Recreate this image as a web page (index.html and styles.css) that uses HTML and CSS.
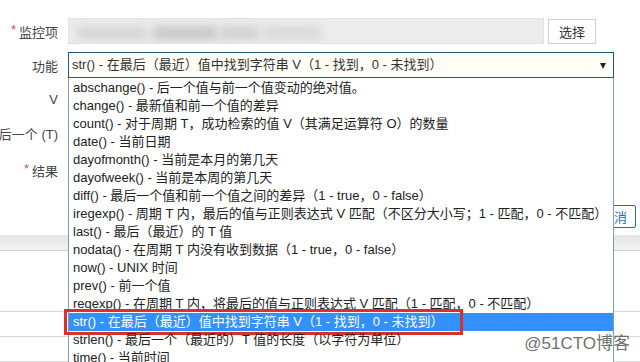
FILE: index.html
```html
<!DOCTYPE html>
<html lang="zh-CN">
<head>
  <meta charset="UTF-8">
  <title>触发器表达式</title>
  <link rel="stylesheet" href="styles.css">
</head>
<body>
  <div class="dialog">
    <div class="row">
      <div class="label"><span class="req">*</span>监控项</div>
      <div class="field">
        <div class="input-blur">
          <span class="blot b1"></span>
          <span class="blot b2"></span>
          <span class="blot b3"></span>
          <span class="blot b4"></span>
        </div>
        <button class="btn">选择</button>
      </div>
    </div>
    <div class="row">
      <div class="label">功能</div>
      <div class="select">
        <span class="select-value">str() - 在最后（最近）值中找到字符串 V（1 - 找到，0 - 未找到）</span>
        <span class="select-arrow"></span>
        <ul class="options">
          <li>abschange() - 后一个值与前一个值变动的绝对值。</li>
          <li>change() - 最新值和前一个值的差异</li>
          <li>count() - 对于周期 T，成功检索的值 V（其满足运算符 O）的数量</li>
          <li>date() - 当前日期</li>
          <li>dayofmonth() - 当前是本月的第几天</li>
          <li>dayofweek() - 当前是本周的第几天</li>
          <li>diff() - 最后一个值和前一个值之间的差异（1 - true，0 - false）</li>
          <li>iregexp() - 周期 T 内，最后的值与正则表达式 V 匹配（不区分大小写；1 - 匹配，0 - 不匹配）</li>
          <li>last() - 最后（最近）的 T 值</li>
          <li>nodata() - 在周期 T 内没有收到数据（1 - true，0 - false）</li>
          <li>now() - UNIX 时间</li>
          <li>prev() - 前一个值</li>
          <li>regexp() - 在周期 T 内，将最后的值与正则表达式 V 匹配（1 - 匹配，0 - 不匹配）</li>
          <li class="selected">str() - 在最后（最近）值中找到字符串 V（1 - 找到，0 - 未找到）</li>
          <li>strlen() - 最后一个（最近的）T 值的长度（以字符为单位）</li>
          <li>time() - 当前时间</li>
        </ul>
      </div>
    </div>
    <div class="row">
      <div class="label">V</div>
      <div class="field"><div class="input"></div></div>
    </div>
    <div class="row">
      <div class="label"><span>最后一个 (T)</span></div>
      <div class="field"><div class="input"></div></div>
    </div>
    <div class="row row-result">
      <div class="label"><span class="req">*</span>结果</div>
      <div class="field"><div class="input"></div></div>
    </div>
    <div class="actions">
      <button class="btn btn-cancel">取消</button>
    </div>
  </div>
  <div class="band"></div>
  <div class="table">
    <div class="tr tr-tall"></div>
    <div class="tr"></div>
    <div class="tr"></div>
  </div>
  <div class="watermark">@51CTO博客</div>
</body>
</html>
```

FILE: styles.css
```css
body {
  background: #fff;
  color: #333;
  font-family: "Liberation Sans", "Noto Sans CJK SC", sans-serif;
  font-size: 13px;
  margin: 0;
  overflow: hidden;
}
.dialog {
  display: flex;
  flex-direction: column;
  gap: 8px;
  height: 217px;
  padding-top: 18px;
}
.row {
  align-items: center;
  display: flex;
  height: 26px;
}
.row-result { margin-top: 3px; }
.label {
  color: #444;
  display: flex;
  flex: 0 0 58px;
  justify-content: flex-end;
  min-width: 0;
  padding-right: 10px;
  white-space: nowrap;
}
.req {
  color: #d9534f;
  margin-right: 3px;
}
.field {
  align-items: center;
  display: flex;
  gap: 4px;
}
.input-blur {
  background: #ececec;
  border: 1px solid #e2e2e2;
  height: 24px;
  overflow: hidden;
  position: relative;
  width: 474px;
}
.blot {
  background: #cfcfcf;
  filter: blur(4px);
  height: 14px;
  position: absolute;
  top: 7px;
}
.b1 { left: 8px; width: 70px; background: #d6d6d6; }
.b2 { left: 84px; width: 64px; background: #c9c9c9; }
.b3 { left: 150px; width: 40px; background: #d2d2d2; }
.b4 { left: 194px; width: 58px; background: #dadada; }
.input {
  border: 1px solid #ccc;
  height: 24px;
  width: 300px;
}
.btn {
  background: #fff;
  border: 1px solid #cfcfcf;
  color: #333;
  font-family: inherit;
  font-size: 13px;
  height: 25px;
  padding: 0 10px;
}
.select {
  background: #fffdf6;
  border: 1px solid #1d5b80;
  box-sizing: border-box;
  height: 26px;
  position: relative;
  width: 546px;
}
.select-value {
  display: block;
  line-height: 24px;
  padding-left: 3px;
  white-space: nowrap;
}
.select-arrow {
  border-left: 3px solid transparent;
  border-right: 3px solid transparent;
  border-top: 6px solid #222;
  position: absolute;
  right: 7px;
  top: 10px;
}
.options {
  background: #fff;
  border: 1px solid #7f9db9;
  border-top: none;
  color: #222;
  left: -1px;
  list-style: none;
  margin: 0;
  padding: 1px 0 0;
  position: absolute;
  right: -1px;
  top: 25px;
  z-index: 2;
}
.options li {
  height: 18px;
  line-height: 18px;
  padding-left: 4px;
  position: relative;
  white-space: nowrap;
}
.options li.selected {
  background: #3390ff;
  color: #fff;
}
.options li.selected::after {
  border: 3px solid #d8302b;
  content: "";
  height: 20px;
  left: -5px;
  position: absolute;
  top: -4px;
  width: 393px;
}
.actions {
  display: flex;
  justify-content: flex-end;
  margin-top: 14px;
  padding-right: 4px;
}
.btn-cancel {
  border-color: #2f6f94;
  border-radius: 2px;
  color: #1f6fa8;
  height: 23px;
  padding: 0 8px;
}
.band {
  background: linear-gradient(#e4e4e4, #f3f3f3);
  border-bottom: 1px solid #cfcfcf;
  height: 15px;
}
.tr {
  border-bottom: 1px solid #d9d9d9;
  height: 24px;
}
.tr-tall { height: 60px; }
.watermark {
  bottom: 8px;
  color: #6f6f6f;
  font-size: 17px;
  position: absolute;
  right: 10px;
  text-shadow: 0 0 2px #fff;
  z-index: 3;
}
```
